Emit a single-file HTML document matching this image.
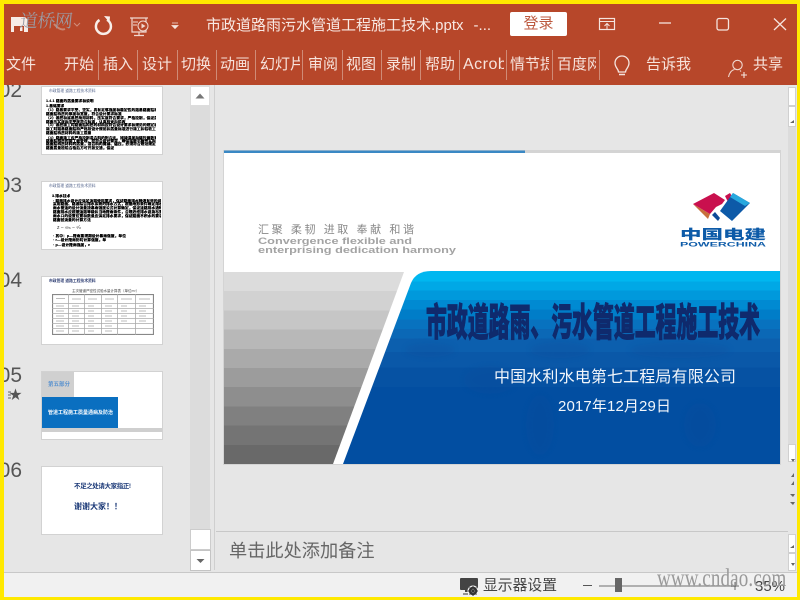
<!DOCTYPE html>
<html lang="zh"><head><meta charset="utf-8"><title>市政道路雨污水管道工程施工技术</title>
<style>
html,body{margin:0;padding:0;width:800px;height:600px;overflow:hidden;background:#e6e6e6}
body{position:relative;font-family:"Liberation Sans","Noto Sans CJK SC",sans-serif}
.a{position:absolute;white-space:nowrap}
.tb{top:55px;font-size:15px;line-height:20px;color:#f7e3dc;overflow:hidden}
.sep{position:absolute;top:50px;width:1px;height:30px;background:#cf8b77}
.num{position:absolute;font-size:21px;line-height:24px;color:#555;right:778px}
.th{position:absolute;left:41px;width:120px;height:67px;background:#fff;border:1px solid #d2d2d2;overflow:hidden}
.h{position:absolute;left:7px;top:2px;font-size:3.800px;line-height:5px;color:#5a6a90;white-space:nowrap}
.l{position:absolute;font-size:3.700px;line-height:4px;height:4px;color:#000;font-weight:900;white-space:nowrap;letter-spacing:.1px;text-shadow:0 0 .3px #000;overflow:hidden}
.w1{left:4px;max-width:110px}
.w2{left:11px;max-width:108px}
.sb{position:absolute;left:788px;width:8px;background:#fff;border:1px solid #d0d0d0;box-sizing:border-box}
</style></head><body>

<!-- title bar + ribbon -->
<div class="a" style="left:0;top:0;width:800px;height:85px;background:#b7472a"></div>

<svg class="a" style="left:0;top:0" width="800" height="85" fill="none">
<!-- save -->
<path d="M11 17h14l3 3v12H11z" fill="#f7ebe6"/><rect x="14" y="26" width="10" height="6" fill="#b7472a"/><rect x="20" y="27" width="2.500" height="4" fill="#f7ebe6"/>
<!-- undo hint -->
<path d="M54 24q6 7 11 5" stroke="#c98673" stroke-width="2"/>
<path d="M74 23l3 3 3-3" stroke="#d08d7b" stroke-width="1"/>
<!-- redo -->
<path d="M107 19.800a7.500 7.500 0 1 1-7.500 .2" stroke="#f8eee9" stroke-width="2.500"/><path d="M104 16l6 .5-.5 6z" fill="#f8eee9"/>
<!-- slide show -->
<path d="M130 18h18M132 18v14h14V18M139 32v3M134 35.500h10" stroke="#f0d8d0" stroke-width="1.200"/>
<circle cx="143" cy="26" r="5" stroke="#f0d8d0" fill="#b7472a"/><path d="M141.500 23.500l4 2.500-4 2.500z" fill="#f0d8d0"/>
<path d="M133 22h5M133 25h4" stroke="#f0d8d0"/>
<!-- qat dropdown -->
<path d="M172 23h6M172 25.500h6l-3 3z" stroke="#f5e4de" fill="#f5e4de" stroke-width=".8"/>
<!-- ribbon display -->
<rect x="599.500" y="18.500" width="15" height="11" stroke="#f5e4de" stroke-width="1.200"/><path d="M599 21.500h16" stroke="#f5e4de"/><path d="M607 29v-5M604.500 26l2.500-2.500 2.500 2.500" stroke="#f5e4de"/>
<!-- window controls -->
<path d="M659 23h12" stroke="#f5e4de" stroke-width="1.300"/>
<rect x="717" y="18.500" width="11.500" height="11.500" rx="2" stroke="#f5e4de" stroke-width="1.300"/>
<path d="M774 18.500l12 11.500M786 18.500l-12 11.500" stroke="#f5e4de" stroke-width="1.300"/>
<!-- bulb -->
<path d="M618.500 72c0-3-3.500-4.500-3.500-9a7 7 0 0 1 14 0c0 4.500-3.500 6-3.500 9z" stroke="#f5e4de" stroke-width="1.300"/><path d="M619 74.500h6" stroke="#f5e4de" stroke-width="1.500"/>
<!-- person -->
<circle cx="737.500" cy="65" r="4.700" stroke="#f0d8d0" stroke-width="1.100"/><path d="M728.500 77c1-4.500 3.500-7 6-7.500M740 70.500l1 1" stroke="#f0d8d0" stroke-width="1.100"/><path d="M741 75h6M744 72v6" stroke="#f5e4de" stroke-width="1.100"/>
</svg>

<div class="a" style="left:206px;top:16px;font-size:15px;line-height:20px;color:#f8e9e4">市政道路雨污水管道工程施工技术.pptx<span style="margin-left:10px">-...</span></div>
<div class="a" style="left:510px;top:12px;width:57px;height:24px;background:#fff;border-radius:2px;text-align:center;font-size:15px;line-height:24px;color:#bd5a40">登录</div>

<div class="a tb" style="left:6px">文件</div>
<div class="a tb" style="left:64px">开始</div><div class="sep" style="left:98px"></div>
<div class="a tb" style="left:103px">插入</div><div class="sep" style="left:137px"></div>
<div class="a tb" style="left:142px">设计</div><div class="sep" style="left:177px"></div>
<div class="a tb" style="left:181px">切换</div><div class="sep" style="left:216px"></div>
<div class="a tb" style="left:220px">动画</div><div class="sep" style="left:255px"></div>
<div class="a tb" style="left:260px;width:40px">幻灯片</div><div class="sep" style="left:302px"></div>
<div class="a tb" style="left:308px">审阅</div><div class="sep" style="left:342px"></div>
<div class="a tb" style="left:346px">视图</div><div class="sep" style="left:381px"></div>
<div class="a tb" style="left:386px">录制</div><div class="sep" style="left:420px"></div>
<div class="a tb" style="left:425px">帮助</div><div class="sep" style="left:459px"></div>
<div class="a tb" style="left:463px;width:41px;font-size:16px;letter-spacing:.5px">Acrobat</div><div class="sep" style="left:506px"></div>
<div class="a tb" style="left:510px;width:39px">情节提要</div><div class="sep" style="left:552px"></div>
<div class="a tb" style="left:557px;width:39px">百度网盘</div><div class="sep" style="left:599px"></div>
<div class="a tb" style="left:646px">告诉我</div>
<div class="a tb" style="left:753px">共享</div>

<!-- slide numbers -->
<div class="num" style="top:79px;clip-path:inset(6px 0 0 0)">02</div>
<div class="num" style="top:174px">03</div>
<div class="num" style="top:269px">04</div>
<div class="num" style="top:364px">05</div>
<div class="num" style="top:459px">06</div>
<div class="a" style="left:9px;top:388px;font-size:13px;line-height:14px;color:#555">★</div>
<svg class="a" style="left:8px;top:390px" width="6" height="10"><path d="M0 2h3M0 5h3M0 8h3" stroke="#666"/></svg>

<!-- thumbnails -->
<div class="th" style="top:86px">
<div class="h">市政管理 道路工程技术资料</div>
<div class="l w1" style="top:12px">1.4.1 路面的质量要求和说明</div>
<div class="l w1" style="top:17px">1.基础要求</div>
<div class="l w1" style="top:21px">（1）路基要求平整、坚实，具有足够强度和稳定性的路基路面结构层材料</div>
<div class="l w1" style="top:25px">路面结构层的厚度和宽度，符合设计要求标准</div>
<div class="l w1" style="top:29px">（2）基层和底基层所用材料，压实度符合要求，严格控制，保证质量和施工</div>
<div class="l w1" style="top:33px">路面压实度和平整度符合标准，认真检查和验收</div>
<div class="l w1" style="top:36px">（3）基层施工时路面结构层的材料应符合设计要求和规范的规定标准要求</div>
<div class="l w1" style="top:40px">施工时路基路面结构严格按设计规范和质量标准进行施工和验收工作</div>
<div class="l w1" style="top:44px">路面结构层材料的施工质量</div>
<div class="l w1" style="top:49px">（4）路面施工应严格控制混合料的配合比、摊铺温度和碾压遍数等工艺</div>
<div class="l w1" style="top:52px">路面结构层的施工缝处理，应符合设计要求，确保接缝平顺密实和稳定</div>
<div class="l w1" style="top:55px">路面结构层材料的质量，混合料的摊铺、碾压，必须符合规范规定要求</div>
<div class="l w1" style="top:59px">路面质量检验合格后方可开放交通，保证</div>
</div>
<div class="th" style="top:181px">
<div class="h">市政管理 道路工程技术资料</div>
<div class="l w2" style="left:10px;top:12px">3.排水技术</div>
<div class="l w2" style="top:17px">· 路面排水设计应满足道路使用要求，保证路面排水畅通有效的设计方法</div>
<div class="l w2" style="top:20px">采用路面、路基综合排水系统的排水方式，根据地形条件确定排水系统</div>
<div class="l w2" style="top:24px">雨水管道的设计流量按暴雨强度公式计算确定，保证道路排水通畅有效</div>
<div class="l w2" style="top:28px">路面排水应根据道路等级和当地降雨条件，合理选择排水设施布置方式</div>
<div class="l w2" style="top:32px">雨水口的设置位置和数量应满足排水要求，保证路面不积水的要求标准</div>
<div class="l w2" style="top:36px">路面径流量的计算方法</div>
<div class="a" style="left:15px;top:43px;font-size:5px;line-height:6px;color:#333">z − ∞ₙ − ⁿ⁄ₙ</div>
<div class="l w2" style="top:52px">· 其中：p—降雨重现期设计暴雨强度，单位</div>
<div class="l w2" style="top:56px">· r—设计降雨历时计算强度，单</div>
<div class="l w2" style="top:61px">· p—设计降雨强度，n</div>
</div>
<div class="th" style="top:276px">
<div class="h" style="color:#2a3a70;font-weight:700">市政管理 道路工程技术资料</div>
<div class="a" style="left:30px;top:12px;font-size:3.500px;line-height:4px;color:#444">主次管道严密性试验水量计算表（单位m³）</div>
<svg class="a" style="left:10px;top:17px" width="102" height="41"><rect x=".5" y=".5" width="101" height="40" fill="#fff" stroke="#888" stroke-width="1.200"/><path d="M0 9.500h102M0 14.500h102M0 19.500h102M0 24.500h102M0 29.500h102M0 34.500h102M16.500 0v41M32.500 0v41M49.500 0v41M65.500 0v41M83.500 0v41" stroke="#aaa" stroke-width=".8"/><path d="M4 4.500h9M20 5h9M36 5h9M53 5h9M69 5h11M87 5h11M4 12h8M20 12h7M36 12h6M53 12h7M69 12h6M87 12h7M4 17h8M20 17h7M36 17h6M53 17h7M69 17h6M87 17h7M4 22h8M20 22h7M36 22h6M53 22h7M69 22h6M87 22h7M4 27h8M20 27h7M36 27h6M53 27h7M69 27h6M87 27h7M4 32h8M20 32h7M36 32h6M53 32h7M4 37h8M20 37h7M36 37h6M53 37h7" stroke="#bbb"/></svg>
</div>
<div class="th" style="top:371px">
<div class="a" style="left:0;top:0;width:32px;height:25px;background:#d0d0d0"></div>
<div class="a" style="left:0;top:25px;width:76px;height:31px;background:#0a6fc0"></div>
<div class="a" style="left:0;top:56px;width:120px;height:4px;background:#cfcfcf"></div>
<div class="a" style="left:6px;top:9px;font-size:5.500px;line-height:8px;color:#5b93cf;font-weight:700">第五部分</div>
<div class="a" style="left:6px;top:37px;font-size:5px;line-height:8px;color:#fff;font-weight:700">管道工程施工质量通病及防治</div>
</div>
<div class="th" style="top:466px">
<div class="a" style="left:32px;top:15px;font-size:6.500px;line-height:9px;color:#1c3a78;font-weight:700;letter-spacing:-.4px">不足之处请大家指正!</div>
<div class="a" style="left:32px;top:34px;font-size:8px;line-height:11px;color:#1c3a78;font-weight:700">谢谢大家！！</div>
</div>

<!-- left scrollbar -->
<div class="a" style="left:190px;top:85px;width:20px;height:485px;background:#dcdcdc"></div>
<div class="a" style="left:190px;top:86px;width:20px;height:20px;background:#fff;border:1px solid #ddd;box-sizing:border-box"></div>
<svg class="a" style="left:190px;top:86px" width="20" height="20"><path d="M5.500 12.500h9L10 7.500z" fill="#777"/></svg>
<div class="a" style="left:190px;top:529px;width:21px;height:21px;background:#fff;border:1px solid #ccc;box-sizing:border-box"></div>
<div class="a" style="left:190px;top:550px;width:21px;height:21px;background:#fff;border:1px solid #c4c4c4;box-sizing:border-box"></div>
<svg class="a" style="left:190px;top:550px" width="21" height="21"><path d="M6.500 9h8l-4 4z" fill="#666"/></svg>
<div class="a" style="left:214px;top:85px;width:1px;height:485px;background:#cfcfcf"></div>

<!-- slide -->
<svg class="a" style="left:223px;top:150px" width="559" height="316" viewBox="223 150 559 316">
<defs>
<linearGradient id="g" x1="0" y1="272" x2="0" y2="464" gradientUnits="userSpaceOnUse">
<stop offset="0" stop-color="#dcdcdc"/><stop offset=".1" stop-color="#dcdcdc"/><stop offset=".1" stop-color="#d2d2d2"/><stop offset=".2" stop-color="#d2d2d2"/><stop offset=".2" stop-color="#c6c6c6"/><stop offset=".3" stop-color="#c6c6c6"/><stop offset=".3" stop-color="#b8b8b8"/><stop offset=".4" stop-color="#b8b8b8"/><stop offset=".4" stop-color="#aaa"/><stop offset=".5" stop-color="#aaa"/><stop offset=".5" stop-color="#9c9c9c"/><stop offset=".6" stop-color="#9c9c9c"/><stop offset=".6" stop-color="#8e8e8e"/><stop offset=".7" stop-color="#8e8e8e"/><stop offset=".7" stop-color="#808080"/><stop offset=".8" stop-color="#808080"/><stop offset=".8" stop-color="#747474"/><stop offset=".9" stop-color="#747474"/><stop offset=".9" stop-color="#696969"/><stop offset="1" stop-color="#696969"/>
</linearGradient>
<linearGradient id="b" x1="0" y1="271" x2="0" y2="464" gradientUnits="userSpaceOnUse">
<stop offset="0" stop-color="#00b7f0"/><stop offset=".055" stop-color="#00b7f0"/><stop offset=".055" stop-color="#00a8e6"/><stop offset=".1" stop-color="#00a8e6"/><stop offset=".1" stop-color="#0099dc"/><stop offset=".15" stop-color="#0099dc"/><stop offset=".15" stop-color="#008ad2"/><stop offset=".2" stop-color="#008ad2"/><stop offset=".2" stop-color="#007dc8"/><stop offset=".25" stop-color="#007dc8"/><stop offset=".25" stop-color="#0872bf"/><stop offset=".3" stop-color="#0872bf"/><stop offset=".3" stop-color="#0b68b6"/><stop offset=".35" stop-color="#0b68b6"/><stop offset=".35" stop-color="#0c5fae"/><stop offset=".42" stop-color="#0c5fae"/><stop offset=".42" stop-color="#0a58a8"/><stop offset=".5" stop-color="#0a58a8"/><stop offset=".5" stop-color="#0652a3"/><stop offset=".6" stop-color="#0652a3"/><stop offset=".6" stop-color="#024ea1"/><stop offset="1" stop-color="#024ea1"/>
</linearGradient>
<filter id="bl"><feGaussianBlur stdDeviation="3"/></filter>
<filter id="s"><feGaussianBlur stdDeviation=".35"/></filter>
</defs>
<rect x="223" y="150" width="558" height="315" fill="#d4d4d4"/>
<rect x="224" y="151" width="556" height="313" fill="#fff"/>
<rect x="224" y="151" width="556" height="2" fill="#d4d4d4"/>
<rect x="224" y="150.500" width="301" height="2.500" fill="#3a88c4"/>
<polygon points="224,272 404,272 333,464 224,464" fill="url(#g)"/>
<path d="M343 464L411 283Q416 271 431 271H780V464Z" fill="url(#b)"/>
<g fill="#0a4a98" opacity=".22" filter="url(#bl)">
<ellipse cx="430" cy="350" rx="25" ry="7"/><ellipse cx="490" cy="380" rx="26" ry="14"/><ellipse cx="560" cy="350" rx="30" ry="8"/><ellipse cx="540" cy="425" rx="14" ry="30"/><ellipse cx="680" cy="350" rx="50" ry="8"/><ellipse cx="700" cy="425" rx="16" ry="22"/>
</g>
<g filter="url(#s)">
<text x="258" y="233" font-size="11" fill="#888" textLength="156">汇聚 柔韧 进取 奉献 和谐</text>
<text x="258" y="244" font-size="9.500" font-weight="700" fill="#a3a3a3" textLength="154" lengthAdjust="spacingAndGlyphs">Convergence flexible and</text>
<text x="258" y="253" font-size="9.500" font-weight="700" fill="#a3a3a3" textLength="198" lengthAdjust="spacingAndGlyphs">enterprising dedication harmony</text>
</g>
<!-- logo -->
<polygon points="693,204 710,214 708,219" fill="#c8703c"/>
<polygon points="693,204 714,193 725,200 722,204 716,207 710,214" fill="#c9104e"/>
<polygon points="725,196 730,193 733,198 728,202" fill="#c9104e"/>
<polygon points="720,211 733,193 750,203 732,221" fill="#0d5aa8"/>
<polygon points="733,193 750,203 745,206 730,197" fill="#28a8de"/>
<polygon points="712,215 715,212 720,218 718,221" fill="#0d4a98"/>
<text x="680" y="239" font-size="13" font-weight="900" fill="#0d5ba8" textLength="86" lengthAdjust="spacingAndGlyphs">中国电建</text>
<text x="680" y="246.500" font-size="6.500" font-weight="700" fill="#0d5ba8" textLength="86" lengthAdjust="spacingAndGlyphs">POWERCHINA</text>
<!-- title -->
<text transform="translate(426 336) scale(1 1.78)" x="0" y="0" font-size="21.800" font-weight="900" fill="#0f2a6d" stroke="#0f2a6d" stroke-width=".5" textLength="334" lengthAdjust="spacingAndGlyphs">市政道路雨、污水管道工程施工技术</text>
<text x="494" y="382" font-size="16" fill="#f2f6fb" textLength="242">中国水利水电第七工程局有限公司</text>
<text x="558" y="411" font-size="15" fill="#f2f6fb" textLength="113">2017年12月29日</text>
</svg>

<!-- right scrollbar -->
<div class="a" style="left:788px;top:85px;width:8px;height:485px;background:#e6e6e6"></div>
<div class="a" style="left:788px;top:127px;width:8px;height:317px;background:#dcdcdc"></div>
<div class="sb" style="top:87px;height:19px"></div>
<div class="sb" style="top:106px;height:21px"></div>
<div class="sb" style="top:444px;height:18px"></div>
<div class="sb" style="top:534px;height:19px"></div>
<div class="sb" style="top:553px;height:18px"></div>
<svg class="a" style="left:788px;top:85px" width="8" height="490" fill="#666">
<path d="M6 38h-4l4-3zM3 374l4 0-2 3zM6 392v-4l-3 4zM6 400v-4l-3 4zM2 409l5 0-2 3zM2 417l5 0-2 3zM6 463h-4l4-3zM3 478l4 0-2 3z"/>
</svg>

<!-- notes -->
<div class="a" style="left:216px;top:531px;width:572px;height:1px;background:#c8c8c8"></div>
<div class="a" style="left:229px;top:539px;font-size:18.200px;line-height:24px;color:#666">单击此处添加备注</div>

<!-- status bar -->
<div class="a" style="left:0;top:572px;width:800px;height:28px;background:#f1f1f1;border-top:1px solid #c8c8c8;box-sizing:border-box"></div>
<svg class="a" style="left:458px;top:575px" width="24" height="22">
<rect x="2" y="3" width="18" height="12" rx="1" fill="#444"/><path d="M7 15h6v2H7z" fill="#444"/>
<circle cx="15" cy="16" r="5.500" fill="#f1f1f1"/><circle cx="15" cy="16" r="3.200" fill="none" stroke="#333" stroke-width="2"/><path d="M15 11v10M10 16h10M11.500 12.500l7 7M18.500 12.500l-7 7" stroke="#333" stroke-width="1"/>
<path d="M5 19h5" stroke="#333"/>
</svg>
<div class="a" style="left:483px;top:576px;font-size:14.800px;line-height:20px;color:#444">显示器设置</div>
<div class="a" style="left:583px;top:585px;width:9px;height:1px;background:#555"></div>
<div class="a" style="left:599px;top:585px;width:137px;height:2px;background:#b0b0b0"></div>
<div class="a" style="left:615px;top:578px;width:7px;height:14px;background:#666"></div>
<svg class="a" style="left:730px;top:581px" width="10" height="10"><path d="M1 5h8M5 1v8" stroke="#666"/></svg>
<div class="a" style="left:755px;top:578px;font-size:15px;line-height:18px;color:#444">35%</div>

<!-- watermarks -->
<div class="a" style="left:20px;top:7px;font-family:'Noto Serif CJK SC',serif;font-size:18px;line-height:26px;color:#9a9ea8;opacity:.95;transform:skewX(-6deg);letter-spacing:-.5px">道桥网</div>
<div class="a" style="left:657px;top:568px;font-family:'Liberation Serif',serif;font-size:19px;line-height:22px;color:#999;transform:scaleY(1.35);transform-origin:left center;letter-spacing:.15px">www.cndao.com</div>

<!-- yellow frame -->
<div class="a" style="left:0;top:0;width:800px;height:4px;background:#ffe900"></div>
<div class="a" style="left:0;top:597px;width:800px;height:3px;background:#ffe900"></div>
<div class="a" style="left:0;top:0;width:4px;height:600px;background:#ffe900"></div>
<div class="a" style="left:797px;top:0;width:3px;height:600px;background:#ffe900"></div>
</body></html>
